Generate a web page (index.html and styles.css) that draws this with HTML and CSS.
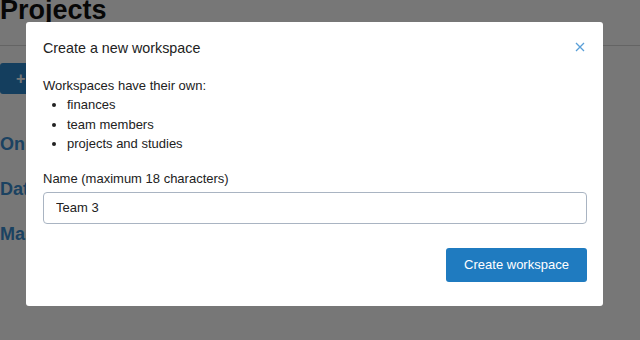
FILE: index.html
```html
<!DOCTYPE html>
<html lang="en">
<head>
  <meta charset="UTF-8" />
  <meta name="viewport" content="width=device-width, initial-scale=1.0"/>
  <title>Projects</title>
  <link rel="stylesheet" href="styles.css">
</head>
<body>
  <div class="page">
    <header class="page-header">
      <h1>Projects</h1>
    </header>
    <div class="toolbar">
      <button type="button" class="add-btn">+ New project</button>
    </div>
    <ul class="project-list">
      <li><a href="#">Onboarding study</a></li>
      <li><a href="#">Data collection</a></li>
      <li><a href="#">Market research</a></li>
    </ul>
  </div>

  <div class="overlay">
    <div class="modal">
      <div class="modal-head">
        <h2>Create a new workspace</h2>
        <button type="button" class="close-btn" aria-label="Close">
          <svg width="10" height="10" viewBox="0 0 10 10">
            <path d="M1 1 L9 9 M9 1 L1 9" stroke="#5a9fd8" stroke-width="1.3" fill="none"/>
          </svg>
        </button>
      </div>

      <p class="intro">Workspaces have their own:</p>
      <ul class="features">
        <li>finances</li>
        <li>team members</li>
        <li>projects and studies</li>
      </ul>

      <form class="form-group">
        <label for="workspaceName">Name (maximum 18 characters)</label>
        <input type="text" id="workspaceName" value="Team 3" maxlength="18" />
      </form>

      <div class="button-group">
        <button type="button" class="create-btn">Create workspace</button>
      </div>
    </div>
  </div>
</body>
</html>
```

FILE: styles.css
```css
* {
  box-sizing: border-box;
}

body {
  margin: 0;
  background: white;
  font-family: "Liberation Sans", Arial, sans-serif;
  color: #222;
}

.page-header {
  height: 46px;
  border-bottom: 1px solid #d6d6d6;
  overflow: hidden;
}

.page-header h1 {
  margin: -5px 0 0 0;
  font-size: 27px;
  font-weight: bold;
  color: #111;
}

.toolbar {
  padding-top: 17px;
}

.add-btn {
  height: 31px;
  padding: 0 16px;
  background: #2b85c9;
  color: white;
  border: none;
  border-radius: 3px;
  font-family: inherit;
  font-size: 16px;
  font-weight: bold;
}

.project-list {
  list-style: none;
  margin: 0;
  padding: 40px 0 0 0;
}

.project-list li {
  height: 45px;
}

.project-list a {
  color: #3a8ed0;
  font-size: 18px;
  font-weight: bold;
  text-decoration: none;
}

.overlay {
  position: fixed;
  inset: 0;
  background: rgba(0, 0, 0, 0.535);
  padding: 22px 0 0 26px;
}

.modal {
  width: 577px;
  height: 284px;
  background: white;
  border-radius: 3px;
  padding: 16px 16px 0 17px;
}

.modal-head {
  display: flex;
  justify-content: space-between;
  align-items: center;
  height: 20px;
}

.modal-head h2 {
  margin: 0;
  font-size: 14.3px;
  font-weight: normal;
  color: #222;
}

.close-btn {
  background: none;
  border: none;
  padding: 0;
  margin: -3px 2px 0 0;
  display: flex;
}

.intro {
  margin: 18px 0 0 0;
  font-size: 13px;
  line-height: 19px;
}

.features {
  margin: 0;
  padding-left: 24px;
  font-size: 13px;
  line-height: 19.5px;
}

.form-group {
  margin-top: 17px;
}

.form-group label {
  display: block;
  font-size: 13px;
  margin-bottom: 6px;
}

.form-group input {
  width: 544px;
  height: 32px;
  padding: 0 12px;
  border: 1px solid #a9b4c2;
  border-radius: 4px;
  font-family: inherit;
  font-size: 13px;
  color: #222;
}

.button-group {
  display: flex;
  justify-content: flex-end;
  margin-top: 24px;
  width: 544px;
}

.create-btn {
  width: 141px;
  height: 34px;
  background: #1f7bc0;
  color: white;
  border: none;
  border-radius: 3px;
  font-family: inherit;
  font-size: 13px;
}
```
